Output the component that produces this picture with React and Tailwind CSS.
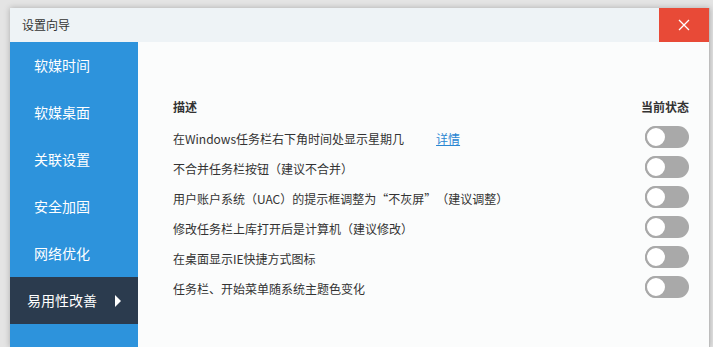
const navItems = ['软媒时间', '软媒桌面', '关联设置', '安全加固', '网络优化', '易用性改善'];

const settings = [
  { label: '在Windows任务栏右下角时间处显示星期几', link: '详情' },
  { label: '不合并任务栏按钮（建议不合并）' },
  { label: '用户账户系统（UAC）的提示框调整为“不灰屏”（建议调整）' },
  { label: '修改任务栏上库打开后是计算机（建议修改）' },
  { label: '在桌面显示IE快捷方式图标' },
  { label: '任务栏、开始菜单随系统主题色变化' },
];

const Toggle = () => (
  <div className="relative w-[44px] h-[22px] rounded-full bg-[#a9a9a9]">
    <div className="absolute left-0 top-0 w-[22px] h-[22px] rounded-full bg-white border-2 border-[#a9a9a9]" />
  </div>
);

export default function App() {
  const active = 5;

  return (
    <div
      className="w-[713px] h-[347px] overflow-hidden bg-[#e4e4e4] pl-[10px] pt-[8px] [text-spacing-trim:space-all]"
      style={{ fontFamily: '"Noto Sans CJK SC", "Noto Sans", sans-serif' }}
    >
      <div className="w-[700px] h-[339px] flex flex-col bg-[#fbfcfc] shadow-[0_0_6px_rgba(0,0,0,0.25)] border-r border-[#bdbdbd]">
        {/* Title bar */}
        <div className="h-[34px] flex items-center justify-between bg-[#eef3f6]">
          <span className="pl-[12px] text-[12px] text-[#333]">设置向导</span>
          <button className="w-[50px] h-[34px] flex items-center justify-center bg-[#e84a37]">
            <svg width="12" height="12" viewBox="0 0 12 12">
              <path d="M1 1L11 11M11 1L1 11" stroke="#fff" strokeWidth="1.3" fill="none" />
            </svg>
          </button>
        </div>

        <div className="flex flex-1">
          {/* Sidebar */}
          <div className="w-[128px] bg-[#2d93dc] flex flex-col">
            {navItems.map((item, i) =>
              i === active ? (
                <div key={item} className="h-[47px] flex items-center pl-[17px] bg-[#2b3b4e] text-white text-[14px]">
                  <span>{item}</span>
                  <svg className="ml-[18px]" width="6" height="12" viewBox="0 0 6 12">
                    <path d="M0 0L6 6L0 12Z" fill="#fff" />
                  </svg>
                </div>
              ) : (
                <div key={item} className="h-[47px] flex items-center pl-[24px] text-white text-[14px]">
                  {item}
                </div>
              )
            )}
          </div>

          {/* Content */}
          <div className="flex-1 pl-[35px] pr-[20px] pt-[50px]">
            <div className="h-[30px] flex items-center justify-between text-[12px] font-bold text-[#333]">
              <span>描述</span>
              <span>当前状态</span>
            </div>
            {settings.map((s) => (
              <div key={s.label} className="h-[30px] flex items-center justify-between text-[12px] text-[#333]">
                <div className="flex items-center pt-[3px]">
                  <span>{s.label}</span>
                  {s.link && (
                    <a className="ml-[32px] text-[#2a86d2] underline" href="#">
                      {s.link}
                    </a>
                  )}
                </div>
                <Toggle />
              </div>
            ))}
          </div>
        </div>
      </div>
    </div>
  );
}
